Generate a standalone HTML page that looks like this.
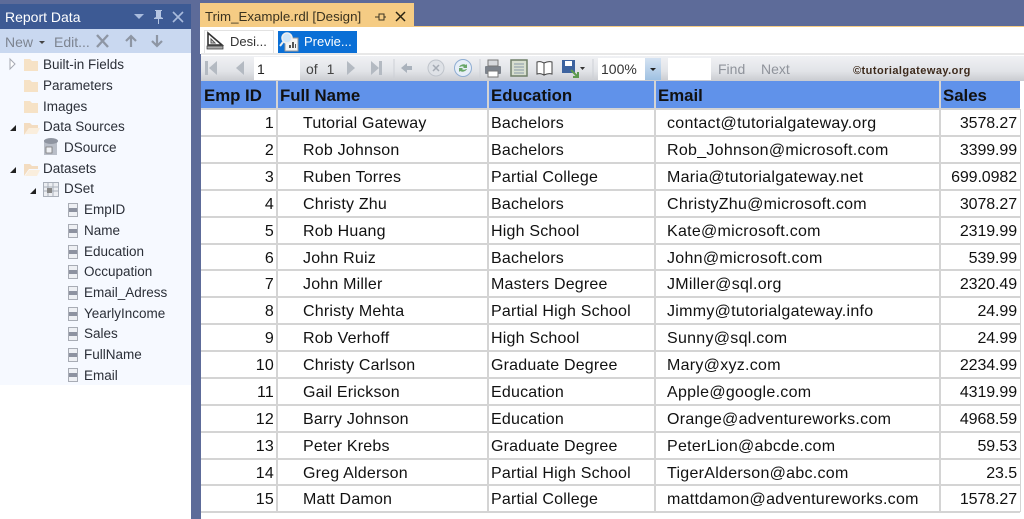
<!DOCTYPE html>
<html><head><meta charset="utf-8"><style>
html,body{margin:0;padding:0;background:#fff}
body{position:relative;width:1024px;height:519px;overflow:hidden;font-family:"Liberation Sans",sans-serif}
div,span,svg{position:absolute}
.t{font-size:13.5px;color:#2b2f38;line-height:18px;white-space:nowrap;font-family:"Liberation Sans",sans-serif}
.r{left:201px;width:819px;height:27px;font-size:16px;line-height:30px;color:#111;letter-spacing:.2px;white-space:nowrap}
.r span{top:0}
.a{right:746px}.b{left:102px}.c{left:290px}.d{left:466px;letter-spacing:.28px}.e{right:3px;letter-spacing:-.1px}
.l{background:#d4d4d4}
.h{top:81px;height:27px;background:#6092ea;font-weight:bold;font-size:16.8px;line-height:29px;color:#111;padding-left:3px;box-sizing:border-box}
.f{left:68px;width:8px;height:12px;border:1px solid #a8acb5;background:linear-gradient(#eef0f4 35%,#8d92a0 35%,#8d92a0 65%,#eef0f4 65%)}
</style></head><body>
<div style="left:0;top:0;width:1024px;height:519px;background:#5d6b99"></div>
<div style="left:0;top:4px;width:191px;height:25px;background:#3d5a94"></div>
<div class="t" style="left:5px;top:8px;color:#fff;font-size:14px">Report Data</div>
<svg style="left:132px;top:10px" width="60" height="14" viewBox="0 0 60 14"><path d="M2 4h10l-5 5z" fill="#a9bbdd"/><path d="M23 0h7v1h-1v6l2 1v1h-4v5h-1V9h-4V8l2-1V1h-1z" fill="#b5c5e2"/><path d="M41 2l10 10M51 2L41 12" stroke="#a9bbdd" stroke-width="1.6" fill="none"/></svg>
<div style="left:0;top:29px;width:191px;height:24px;background:#c9d8f0"></div>
<div class="t" style="left:5px;top:33px;color:#7d8490;font-size:14px">New</div>
<svg style="left:38px;top:40px" width="8" height="5"><path d="M1 1h6l-3 3z" fill="#444"/></svg>
<div class="t" style="left:54px;top:33px;color:#7d8490;font-size:14px">Edit...</div>
<svg style="left:94px;top:33px" width="72" height="17" viewBox="0 0 72 17"><path d="M3 2l11 12M14 2L3 14" stroke="#8e96a4" stroke-width="2.4" fill="none"/><path d="M37 14V4M32 8l5-5 5 5" stroke="#8e96a4" stroke-width="2.2" fill="none"/><path d="M63 2v10M58 8l5 5 5-5" stroke="#8e96a4" stroke-width="2.2" fill="none"/></svg>
<div style="left:0;top:53px;width:191px;height:332px;background:#f6f9ff"></div>
<div style="left:0;top:385px;width:191px;height:134px;background:#fff"></div>

<svg style="left:0;top:53px" width="191" height="332" viewBox="0 0 191 332">
<path d="M10 6l5 5-5 5z" fill="#fff" stroke="#a5a9b2"/>
<path d="M24 6h6l2 2h6v10H24z" fill="#f6e2c6"/>
<path d="M24 27h6l2 2h6v10H24z" fill="#f6e2c6"/>
<path d="M24 48h6l2 2h6v10H24z" fill="#f6e2c6"/>
<path d="M10 78l6-6v6z" fill="#222"/>
<path d="M24 70h6l2 2h6v3H29l-5 7z" fill="#f3dcc0"/><path d="M25 81l4-6h11l-3 6z" fill="#faeedd"/>
<path d="M10 120l6-6v6z" fill="#222"/>
<path d="M24 111h6l2 2h6v3H29l-5 7z" fill="#f3dcc0"/><path d="M25 123l4-6h11l-3 6z" fill="#faeedd"/>
<path d="M30 141l6-6v6z" fill="#222"/>
<path d="M44 87h13v15H44z" fill="#b9bec8"/><ellipse cx="51" cy="88" rx="7" ry="3" fill="#8f95a1"/><path d="M46 94h6v6h-6z" fill="#eef0f4" stroke="#777" stroke-width=".8"/>
<rect x="43.500" y="129.500" width="15" height="14" fill="#eceef2" stroke="#aab0ba"/><path d="M44 134h14M44 138h14M48 130v13M53 130v13" stroke="#aab0ba"/><rect x="47" y="135" width="5" height="5" fill="#888"/>
</svg>
<div class="f" style="top:203px"></div>
<div class="f" style="top:224px"></div>
<div class="f" style="top:245px"></div>
<div class="f" style="top:265px"></div>
<div class="f" style="top:286px"></div>
<div class="f" style="top:307px"></div>
<div class="f" style="top:327px"></div>
<div class="f" style="top:348px"></div>
<div class="f" style="top:368px"></div>

<div class="t" style="left:43px;top:56px">Built-in Fields</div>
<div class="t" style="left:43px;top:77px">Parameters</div>
<div class="t" style="left:43px;top:98px">Images</div>
<div class="t" style="left:43px;top:118px">Data Sources</div>
<div class="t" style="left:64px;top:139px">DSource</div>
<div class="t" style="left:43px;top:160px">Datasets</div>
<div class="t" style="left:64px;top:180px">DSet</div>
<div class="t" style="left:84px;top:201px">EmpID</div>
<div class="t" style="left:84px;top:222px">Name</div>
<div class="t" style="left:84px;top:243px">Education</div>
<div class="t" style="left:84px;top:263px">Occupation</div>
<div class="t" style="left:84px;top:284px">Email_Adress</div>
<div class="t" style="left:84px;top:305px">YearlyIncome</div>
<div class="t" style="left:84px;top:325px">Sales</div>
<div class="t" style="left:84px;top:346px">FullName</div>
<div class="t" style="left:84px;top:367px">Email</div>

<div style="left:200px;top:3px;width:214px;height:23px;background:#f5cc84"></div>
<div class="t" style="left:205px;top:8px;color:#3a3320;font-size:13.3px">Trim_Example.rdl [Design]</div>
<svg style="left:374px;top:10px" width="36" height="14" viewBox="0 0 36 14"><path d="M1 7h4M5 4v6h5V4zM10 7h2" stroke="#3a3320" fill="none"/><path d="M22 2l9 9M31 2l-9 9" stroke="#2a2412" stroke-width="1.5" fill="none"/></svg>
<div style="left:200px;top:26px;width:824px;height:493px;background:#fff"></div>
<div style="left:200px;top:26px;width:824px;height:1px;background:#f5cc84"></div>
<div style="left:200px;top:54px;width:1px;height:465px;background:#5d6b99"></div>
<div style="left:204px;top:30px;width:70px;height:24px;border:1px solid #e2e2e2;border-bottom:0;box-sizing:border-box;background:#fff"></div>
<svg style="left:205px;top:31px" width="20" height="20" viewBox="0 0 20 20"><path d="M3 2v12h14z" fill="#fff" stroke="#333" stroke-width="1.6"/><path d="M6 8v4h4z" fill="#ddd" stroke="#555"/><rect x="2" y="15" width="16" height="3" fill="#aaa" stroke="#333" stroke-width=".7"/></svg>
<div class="t" style="left:230px;top:33px;color:#333;font-size:13px">Desi...</div>
<div style="left:278px;top:31px;width:79px;height:22px;background:#0a6fd6"></div>
<svg style="left:279px;top:31px" width="22" height="22" viewBox="0 0 22 22"><rect x="6" y="7" width="13" height="13" fill="#f4f4f4" stroke="#999"/><circle cx="8" cy="7" r="5" fill="#cfe4f7" stroke="#eee" stroke-width="1.500"/><path d="M4 11l-3 4" stroke="#eee" stroke-width="2"/><path d="M10 17h2v-3h-2zM13 17h2v-6h-2zM16 17h1v-4h-1z" fill="#555"/></svg>
<div class="t" style="left:304px;top:33px;color:#fff;font-size:13px">Previe...</div>
<div style="left:201px;top:53px;width:823px;height:2px;background:#e8e8e8"></div>
<div style="left:201px;top:56px;width:823px;height:25px;background:linear-gradient(#f0f1f4,#e2e4e8 60%,#c9cbd0)"></div>
<svg style="left:201px;top:56px" width="400" height="25" viewBox="0 0 400 25">
<path d="M4 5h3v14H4zM16 5v14L8 12z" fill="#b4bac2"/><path d="M43 5v14l-8-7z" fill="#b4bac2"/>
<path d="M146 5v14l8-7z" fill="#b4bac2"/><path d="M170 5v14l8-7zM178 5h3v14h-3z" fill="#b4bac2"/>
<path d="M193 3v19" stroke="#cdd0d6"/>
<path d="M200 12l6-5v3h5v4h-5v3z" fill="#aab2bc"/>
<circle cx="235" cy="12" r="8" fill="#dfe2e7" stroke="#bfc4cb"/><path d="M232 9l6 6M238 9l-6 6" stroke="#a5abb4" stroke-width="1.500"/>
<circle cx="262" cy="12" r="8.500" fill="#e6eef8" stroke="#8fadd2"/><path d="M258 11a5 5 0 0 1 7-2l1-1v4h-4l1-1a3 3 0 0 0-4 0z" fill="#6aa76a"/><path d="M266 13a5 5 0 0 1-7 2l-1 1v-4h4l-1 1a3 3 0 0 0 4 0z" fill="#6aa76a"/>
<path d="M279 3v19" stroke="#cdd0d6"/>
<rect x="284" y="10" width="16" height="8" rx="1" fill="#7d838c"/><rect x="287" y="4" width="10" height="6" fill="#d7d9dd" stroke="#777"/><rect x="287" y="15" width="10" height="6" fill="#fff" stroke="#777"/>
<rect x="310" y="4" width="16" height="16" fill="#d8dfd0" stroke="#6f7f68" stroke-width="1.500"/><path d="M313 8h10M313 11h10M313 14h10M313 17h10" stroke="#8898a8"/>
<path d="M336 6c3-1 5 0 7 1v12c-2-1-4-2-7-1zM343 7c2-1 5-2 8-1v12c-3-1-6 0-8 1z" fill="#fff" stroke="#444"/>
<path d="M361 4h13v13h-13z" fill="#3d639f"/><rect x="364" y="5" width="7" height="5" fill="#fff"/><path d="M370 14l7 7m-5 0h5v-5" stroke="#5c9a4c" stroke-width="2" fill="none"/><path d="M379 11h5l-2.500 3z" fill="#333"/>
<path d="M392 3v19" stroke="#cdd0d6"/>
</svg>
<div style="left:254px;top:57px;width:46px;height:23px;background:#fff"></div>
<div class="t" style="left:257px;top:60px;color:#222;font-size:14px">1</div>
<div class="t" style="left:306px;top:60px;color:#444;font-size:14px;word-spacing:5px">of 1</div>
<div style="left:598px;top:58px;width:47px;height:22px;background:#fff"></div>
<div class="t" style="left:601px;top:60px;color:#333;font-size:14px">100%</div>
<div style="left:645px;top:58px;width:16px;height:22px;background:linear-gradient(#d5e3f2,#9fc1e2)"></div>
<svg style="left:649px;top:67px" width="8" height="5"><path d="M1 1h6l-3 3z" fill="#222"/></svg>
<div style="left:668px;top:58px;width:43px;height:22px;background:#fff"></div>
<div class="t" style="left:718px;top:60px;color:#8f939b;font-size:14px">Find</div>
<div class="t" style="left:761px;top:60px;color:#8f939b;font-size:14px">Next</div>
<div class="t" style="left:853px;top:62px;color:#3d2a1c;font-size:11px;font-weight:bold;letter-spacing:.45px">©tutorialgateway.org</div>

<div class="h" style="left:201px;width:75px">Emp ID</div>
<div class="h" style="left:277px;width:210px">Full Name</div>
<div class="h" style="left:488px;width:166px">Education</div>
<div class="h" style="left:655px;width:284px">Email</div>
<div class="h" style="left:940px;width:80px">Sales</div>

<div class="r" style="top:109px"><span class="a">1</span><span class="b">Tutorial Gateway</span><span class="c">Bachelors</span><span class="d">contact@tutorialgateway.org</span><span class="e">3578.27</span></div>
<div class="r" style="top:136px"><span class="a">2</span><span class="b">Rob Johnson</span><span class="c">Bachelors</span><span class="d">Rob_Johnson@microsoft.com</span><span class="e">3399.99</span></div>
<div class="r" style="top:163px"><span class="a">3</span><span class="b">Ruben Torres</span><span class="c">Partial College</span><span class="d">Maria@tutorialgateway.net</span><span class="e">699.0982</span></div>
<div class="r" style="top:190px"><span class="a">4</span><span class="b">Christy Zhu</span><span class="c">Bachelors</span><span class="d">ChristyZhu@microsoft.com</span><span class="e">3078.27</span></div>
<div class="r" style="top:217px"><span class="a">5</span><span class="b">Rob Huang</span><span class="c">High School</span><span class="d">Kate@microsoft.com</span><span class="e">2319.99</span></div>
<div class="r" style="top:244px"><span class="a">6</span><span class="b">John Ruiz</span><span class="c">Bachelors</span><span class="d">John@microsoft.com</span><span class="e">539.99</span></div>
<div class="r" style="top:270px"><span class="a">7</span><span class="b">John Miller</span><span class="c">Masters Degree</span><span class="d">JMiller@sql.org</span><span class="e">2320.49</span></div>
<div class="r" style="top:297px"><span class="a">8</span><span class="b">Christy Mehta</span><span class="c">Partial High School</span><span class="d">Jimmy@tutorialgateway.info</span><span class="e">24.99</span></div>
<div class="r" style="top:324px"><span class="a">9</span><span class="b">Rob Verhoff</span><span class="c">High School</span><span class="d">Sunny@sql.com</span><span class="e">24.99</span></div>
<div class="r" style="top:351px"><span class="a">10</span><span class="b">Christy Carlson</span><span class="c">Graduate Degree</span><span class="d">Mary@xyz.com</span><span class="e">2234.99</span></div>
<div class="r" style="top:378px"><span class="a">11</span><span class="b">Gail Erickson</span><span class="c">Education</span><span class="d">Apple@google.com</span><span class="e">4319.99</span></div>
<div class="r" style="top:405px"><span class="a">12</span><span class="b">Barry Johnson</span><span class="c">Education</span><span class="d">Orange@adventureworks.com</span><span class="e">4968.59</span></div>
<div class="r" style="top:432px"><span class="a">13</span><span class="b">Peter Krebs</span><span class="c">Graduate Degree</span><span class="d">PeterLion@abcde.com</span><span class="e">59.53</span></div>
<div class="r" style="top:459px"><span class="a">14</span><span class="b">Greg Alderson</span><span class="c">Partial High School</span><span class="d">TigerAlderson@abc.com</span><span class="e">23.5</span></div>
<div class="r" style="top:485px"><span class="a">15</span><span class="b">Matt Damon</span><span class="c">Partial College</span><span class="d">mattdamon@adventureworks.com</span><span class="e">1578.27</span></div>

<div class="l" style="left:276px;top:81px;width:2px;height:431px"></div>
<div class="l" style="left:487px;top:81px;width:2px;height:431px"></div>
<div class="l" style="left:654px;top:81px;width:2px;height:431px"></div>
<div class="l" style="left:939px;top:81px;width:2px;height:431px"></div>
<div class="l" style="left:1020px;top:109px;width:1px;height:403px"></div>
<div class="l" style="left:201px;top:108px;width:819px;height:2px"></div>
<div class="l" style="left:201px;top:135px;width:819px;height:2px"></div>
<div class="l" style="left:201px;top:162px;width:819px;height:2px"></div>
<div class="l" style="left:201px;top:189px;width:819px;height:2px"></div>
<div class="l" style="left:201px;top:216px;width:819px;height:2px"></div>
<div class="l" style="left:201px;top:243px;width:819px;height:2px"></div>
<div class="l" style="left:201px;top:269px;width:819px;height:2px"></div>
<div class="l" style="left:201px;top:296px;width:819px;height:2px"></div>
<div class="l" style="left:201px;top:323px;width:819px;height:2px"></div>
<div class="l" style="left:201px;top:350px;width:819px;height:2px"></div>
<div class="l" style="left:201px;top:377px;width:819px;height:2px"></div>
<div class="l" style="left:201px;top:404px;width:819px;height:2px"></div>
<div class="l" style="left:201px;top:431px;width:819px;height:2px"></div>
<div class="l" style="left:201px;top:458px;width:819px;height:2px"></div>
<div class="l" style="left:201px;top:484px;width:819px;height:2px"></div>
<div class="l" style="left:201px;top:511px;width:819px;height:2px"></div>
</body></html>
